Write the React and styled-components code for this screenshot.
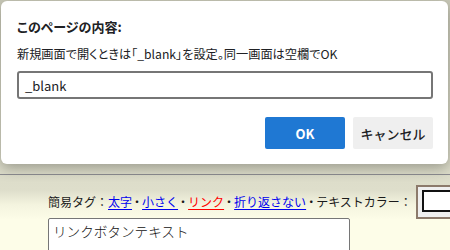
import React from "react";
import styled, { createGlobalStyle } from "styled-components";

const GlobalStyle = createGlobalStyle`
  html, body {
    margin: 0;
    padding: 0;
    width: 450px;
    height: 250px;
    overflow: hidden;
    background: #fdfde8;
  }
  body {
    font-family: "Noto Sans CJK JP", "Noto Sans", sans-serif;
  }
`;

// 背面のページ
const Page = styled.div`
  position: relative;
  width: 450px;
  height: 250px;
  overflow: hidden;
  background: linear-gradient(#c9c9b8 0px, #dedecb 190px, #f4f4df 205px, #fdfde8 220px);
`;

const Header = styled.div`
  height: 174px;
  border-bottom: 1px solid #8c8c90;
`;

const Content = styled.div`
  display: flex;
  flex-direction: column;
  gap: 1px;
  padding: 11px 0 0 48px;
`;

const TagRow = styled.div`
  display: flex;
  align-items: center;
  height: 31px;
  font-size: 12px;
  color: #1a1a1a;
  white-space: nowrap;
`;

const Tag = styled.span`
  color: ${(props) => (props.red ? "#ff0000" : "#0000ee")};
  text-decoration: underline;
  text-underline-offset: 2px;
`;

const Sep = styled.span`
  margin: 0 -1px;
`;

const ColorPicker = styled.div`
  flex: none;
  margin-left: 4px;
  width: 40px;
  height: 27px;
  border: 2px solid #8c7a6b;
  background: #efefef;
  padding: 3px 0 0 4px;
  box-sizing: content-box;
`;

const Swatch = styled.div`
  width: 40px;
  height: 18px;
  border: 2px solid #111;
  background: #fff;
`;

const TextBox = styled.div`
  width: 296px;
  height: 40px;
  border: 1px solid #767676;
  border-radius: 2px;
  background: #fff;
  padding: 2px 0 0 4px;
  font-size: 13.6px;
  font-weight: 300;
  color: #111;
`;

// ダイアログ
const Dialog = styled.div`
  position: absolute;
  left: 1px;
  top: 1px;
  width: 447px;
  height: 163px;
  box-sizing: border-box;
  background: #fff;
  border-radius: 6px;
  box-shadow: 0 4px 14px rgba(0, 0, 0, 0.3);
  padding: 16px 15px 0 16px;
  display: flex;
  flex-direction: column;
`;

const Title = styled.div`
  font-size: 13px;
  font-weight: 700;
  line-height: 20px;
  color: #202124;
  font-feature-settings: "palt";
`;

const Message = styled.div`
  margin-top: 9px;
  font-size: 12.2px;
  line-height: 16px;
  color: #202124;
  white-space: nowrap;
  font-feature-settings: "palt";
`;

const Field = styled.div`
  margin-top: 9px;
  height: 28px;
  box-sizing: border-box;
  border: 2px solid #767676;
  border-radius: 3px;
  padding-left: 6px;
  display: flex;
  align-items: center;
  font-size: 13px;
  color: #202124;
`;

const Buttons = styled.div`
  margin-top: 18px;
  display: flex;
  justify-content: flex-end;
  gap: 8px;
`;

const Button = styled.div`
  width: 80px;
  height: 32px;
  border-radius: 2px;
  display: flex;
  align-items: center;
  justify-content: center;
  font-size: 13px;
  font-weight: ${(props) => (props.primary ? 700 : 500)};
  background: ${(props) => (props.primary ? "#1f78d3" : "#efefef")};
  color: ${(props) => (props.primary ? "#fff" : "#202124")};
`;

export default function App() {
  return (
    <>
      <GlobalStyle />
      <Page>
        <Header />
        <Content>
          <TagRow>
            簡易タグ：<Tag>太字</Tag>
            <Sep>・</Sep>
            <Tag>小さく</Tag>
            <Sep>・</Sep>
            <Tag red>リンク</Tag>
            <Sep>・</Sep>
            <Tag>折り返さない</Tag>
            <Sep>・</Sep>テキストカラー：
            <ColorPicker>
              <Swatch />
            </ColorPicker>
          </TagRow>
          <TextBox>リンクボタンテキスト</TextBox>
        </Content>
        <Dialog>
          <Title>このページの内容:</Title>
          <Message>新規画面で開くときは「_blank」を設定。同一画面は空欄でOK</Message>
          <Field>_blank</Field>
          <Buttons>
            <Button primary>OK</Button>
            <Button>キャンセル</Button>
          </Buttons>
        </Dialog>
      </Page>
    </>
  );
}
